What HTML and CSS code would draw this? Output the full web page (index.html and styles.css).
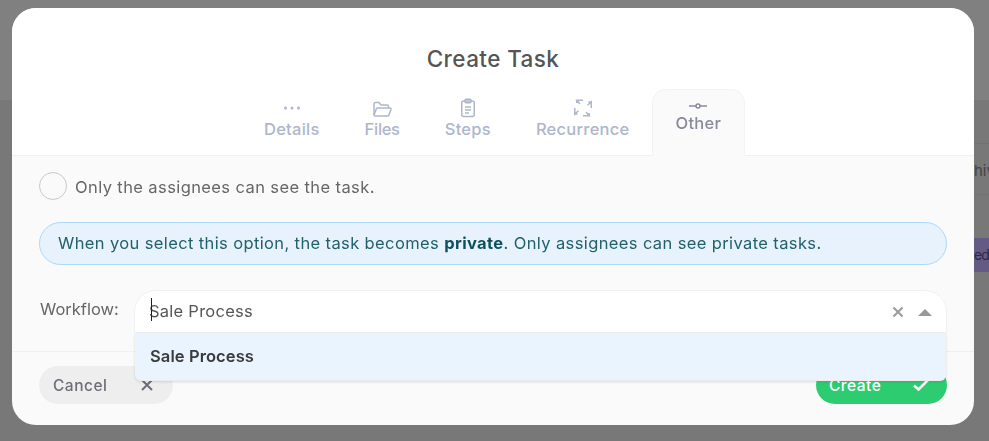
FILE: index.html
```html
<!DOCTYPE html>
<html lang="en">
<head>
  <meta charset="UTF-8">
  <title>Create Task</title>
  <link rel="stylesheet" href="styles.css">
</head>
<body>
  <div class="page-behind">
    <div class="behind-band"></div>
    <div class="behind-text">hiv</div>
    <div class="behind-badge">ed</div>
  </div>
  <div class="overlay">
    <div class="modal">
      <div class="modal-head">
        <h1 class="modal-title">Create Task</h1>
        <div class="tabs">
          <div class="tab">
            <svg class="tab-icon" viewBox="0 0 20 20"><circle cx="3.500" cy="10" r="1.500"/><circle cx="10" cy="10" r="1.500"/><circle cx="16.500" cy="10" r="1.500"/></svg>
            <span>Details</span>
          </div>
          <div class="tab tab-files">
            <svg class="tab-icon line" viewBox="0 0 20 20"><path d="M2 17V6a1.500 1.500 0 0 1 1.500-1.500H7l2 2.500h6a1.500 1.500 0 0 1 1.500 1.500V10"/><path d="M2 17l2.500-6.500a1 1 0 0 1 1-.5h12.500a1 1 0 0 1 1 1.300L17 17a1 1 0 0 1-1 1H3a1 1 0 0 1-1-1z"/></svg>
            <span>Files</span>
          </div>
          <div class="tab">
            <svg class="tab-icon line" viewBox="0 0 20 20"><rect x="3.750" y="3" width="12.500" height="15.500" rx="2"/><rect x="7" y="1.250" width="6" height="3.500" rx="1"/><path d="M7 9h6M7 12h6M7 15h4"/></svg>
            <span>Steps</span>
          </div>
          <div class="tab">
            <svg class="tab-icon line" viewBox="0 0 20 20"><path d="M10 2.250H3.750L7 6M3.750 2.250V5"/><path d="M18.250 10V4L14.500 7.250M18.250 4H15.500"/><path d="M1.750 10v6l3.750-3.250M1.750 16h2.750"/><path d="M10 17.750h6.250L13 14M16.250 17.750V15"/></svg>
            <span>Recurrence</span>
          </div>
          <div class="tab tab-active">
            <svg class="tab-icon line" viewBox="0 0 20 14"><path d="M1 8h7M12 8h7"/><circle cx="10" cy="8" r="2"/></svg>
            <span>Other</span>
          </div>
        </div>
      </div>
      <div class="modal-body">
        <label class="check-row">
          <span class="check-circle"></span>
          <span class="check-text">Only the assignees can see the task.</span>
        </label>
        <div class="note">When you select this option, the task becomes <b>private</b>. Only assignees can see private tasks.</div>
        <div class="field-row">
          <div class="field-label">Workflow:</div>
          <div class="select">
            <div class="select-control">
              <span class="select-value"><i class="caret"></i>Sale Process</span>
              <svg class="select-clear" viewBox="0 0 12 12"><path d="M1.500 1.500l9 9M10.500 1.500l-9 9"/></svg>
              <span class="select-arrow"></span>
            </div>
            <div class="select-menu">
              <div class="select-option">Sale Process</div>
            </div>
          </div>
        </div>
      </div>
      <div class="modal-foot">
        <button class="btn btn-cancel">Cancel
          <svg viewBox="0 0 12 12"><path d="M1 1l10 10M11 1L1 11"/></svg>
        </button>
        <button class="btn btn-create">Create
          <svg viewBox="0 0 16 12"><path d="M1 6.500l4.500 4L15 1"/></svg>
        </button>
      </div>
    </div>
  </div>
</body>
</html>
```

FILE: styles.css
```css
* {
  box-sizing: border-box;
}

html, body {
  height: 100%;
}

body {
  margin: 0;
  overflow: hidden;
  background-color: #787878;
  font-family: Inter, "Liberation Sans", sans-serif;
  color: #555;
}

.page-behind {
  font-size: 15px;
  color: #444;
}

.behind-band {
  height: 100px;
  background-color: #808080;
}

.behind-text {
  position: absolute;
  top: 143px;
  right: 0;
  width: 15px;
  height: 52px;
  line-height: 54px;
  border-top: 1px solid #727272;
  border-bottom: 1px solid #727272;
  white-space: nowrap;
  overflow: hidden;
}

.behind-badge {
  position: absolute;
  top: 238px;
  right: 0;
  width: 15px;
  height: 34px;
  line-height: 34px;
  font-size: 14px;
  letter-spacing: -1px;
  background-color: #635b85;
  color: #2e2a40;
  white-space: nowrap;
  overflow: hidden;
}

.overlay {
  position: fixed;
  inset: 0;
  padding: 8px 15px 16px 12px;
}

.modal {
  display: flex;
  flex-direction: column;
  height: 100%;
  background-color: #fafafa;
  border-radius: 24px;
  overflow: hidden;
}

.modal-head {
  height: 148px;
  flex: none;
  background-color: #fff;
  border-bottom: 1px solid #f0f0f0;
  text-align: center;
}

.modal-title {
  margin: 0;
  padding-top: 37px;
  height: 81px;
  font-size: 22.500px;
  letter-spacing: .4px;
  line-height: 28px;
  font-weight: 500;
  color: #555;
}

.tabs {
  display: flex;
  justify-content: center;
  align-items: flex-start;
}

.tab {
  display: flex;
  flex-direction: column;
  align-items: center;
  padding: 9px 22.500px 0;
  font-size: 16.500px;
  letter-spacing: .25px;
  line-height: 22px;
  font-weight: 500;
  color: #aeb6cb;
}

.tab-files {
  letter-spacing: -.3px;
}

.tab-active {
  height: 67px;
  padding-top: 8px;
  background-color: #fafafa;
  border: 1px solid #f3f3f3;
  border-bottom: 0;
  border-radius: 14px 14px 0 0;
  color: #8a8a9e;
}

.tab-icon {
  display: block;
  width: 20px;
  height: 20px;
  fill: #aeb6cb;
}

.tab-icon.line {
  fill: none;
  stroke: #aeb6cb;
  stroke-width: 1.500;
}

.tab-active .tab-icon.line {
  height: 14px;
  stroke: #8a8a9e;
}

.modal-body {
  flex: 1;
  padding: 16px 27px 0;
}

.check-row {
  display: flex;
  align-items: center;
  gap: 8px;
  height: 28px;
  font-size: 16.500px;
  letter-spacing: .4px;
  line-height: 28px;
  color: #666;
}

.check-text {
  padding-top: 2px;
}

.check-circle {
  width: 28px;
  height: 28px;
  border: 1px solid #c8c8c8;
  border-radius: 50%;
}

.note {
  margin-top: 22px;
  height: 43px;
  padding: 0 18px;
  line-height: 41px;
  font-size: 16.500px;
  letter-spacing: .38px;
  background-color: #e7f2fc;
  border: 1px solid #a8d8fb;
  border-radius: 22px;
  color: #22606c;
}

.note b {
  font-weight: 700;
  color: #0e5060;
}

.field-row {
  display: flex;
  align-items: flex-start;
  margin-top: 25px;
}

.field-label {
  width: 95px;
  padding-left: 1px;
  font-size: 16.500px;
  line-height: 38px;
  color: #666;
}

.select {
  position: relative;
  flex: 1;
  z-index: 2;
}

.select-control {
  display: flex;
  align-items: center;
  height: 43px;
  padding: 0 14px;
  background-color: #fff;
  border: 1px solid #f0f0f0;
  border-radius: 22px 22px 0 0;
}

.select-value {
  flex: 1;
  position: relative;
  padding-bottom: 2px;
  font-size: 16.500px;
  letter-spacing: .25px;
  line-height: 22px;
  color: #555;
}

.caret {
  position: absolute;
  top: -2px;
  left: 2px;
  width: 1px;
  height: 23px;
  background-color: #222;
}

.select-clear {
  width: 12px;
  height: 12px;
  margin-right: 14px;
  fill: none;
  stroke: #999;
  stroke-width: 2;
}

.select-arrow {
  width: 0;
  height: 0;
  margin-top: 1px;
  border-left: 7px solid transparent;
  border-right: 7px solid transparent;
  border-bottom: 7px solid #999;
}

.select-menu {
  position: absolute;
  top: 43px;
  left: 1px;
  right: 1px;
  height: 48px;
  background-color: #e9f4fe;
  border-bottom: 1px solid #ececec;
  border-radius: 0 0 6px 6px;
  box-shadow: 0 1px 3px rgba(0, 0, 0, .12);
}

.select-option {
  padding: 0 14px 0 15px;
  line-height: 46px;
  font-size: 16.500px;
  letter-spacing: .1px;
  font-weight: 600;
  color: #3a3a3a;
}

.modal-foot {
  display: flex;
  justify-content: space-between;
  align-items: flex-start;
  height: 74px;
  flex: none;
  padding: 14px 27px 0;
  border-top: 1px solid #f0f0f0;
}

.btn {
  display: flex;
  align-items: center;
  justify-content: space-between;
  height: 38px;
  border: 0;
  border-radius: 19px;
  font-family: inherit;
  font-size: 15.500px;
  letter-spacing: .5px;
  font-weight: 500;
}

.btn svg {
  fill: none;
  stroke-width: 2;
}

.btn-cancel {
  width: 134px;
  padding: 0 20px 0 14px;
  background-color: #eee;
  color: #6d6d78;
}

.btn-cancel svg {
  width: 12px;
  height: 12px;
  stroke: #6d6d78;
}

.btn-create {
  width: 131px;
  padding: 0 18px 0 13px;
  background-color: #2ecc71;
  color: #fff;
}

.btn-create svg {
  width: 16px;
  height: 12px;
  stroke: #fff;
  stroke-width: 2.500;
}
```
